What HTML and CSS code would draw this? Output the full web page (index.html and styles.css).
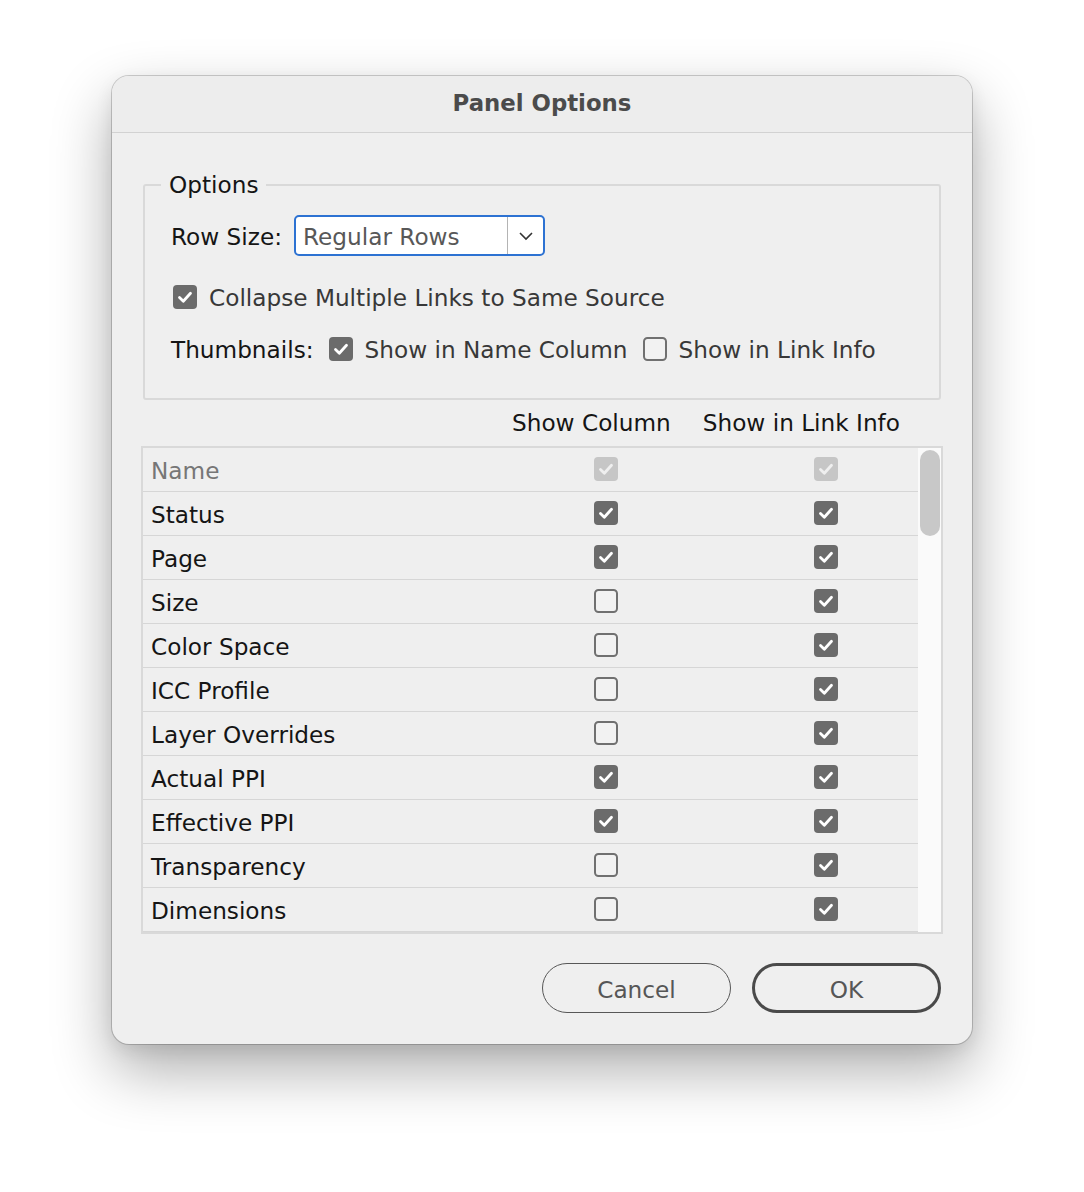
FILE: index.html
```html
<!DOCTYPE html>
<html>
<head>
<meta charset="utf-8">
<title>Panel Options</title>
<link rel="stylesheet" href="styles.css">
</head>
<body>
<div class="dialog">
  <div class="titlebar">Panel Options</div>
  <div class="content">
    <fieldset class="group">
      <legend>Options</legend>
      <div class="rowsize">
        <span class="label">Row Size:</span>
        <div class="select">
          <span class="select-value">Regular Rows</span>
          <span class="select-arrow"><svg viewBox="0 0 16 10" width="16" height="10"><path d="M2 2 L8 8 L14 2" fill="none" stroke="#333" stroke-width="1.6"/></svg></span>
        </div>
      </div>
      <div class="opt-row collapse">
        <svg class="cb on" viewBox="0 0 24 24"><rect x="0" y="0" width="24" height="24" rx="4"/><path d="M6.5 12.5 L10.3 16.2 L17.5 8.2"/></svg>
        <span class="opt-text">Collapse Multiple Links to Same Source</span>
      </div>
      <div class="opt-row thumbs">
        <span class="label">Thumbnails:</span>
        <svg class="cb on" viewBox="0 0 24 24"><rect x="0" y="0" width="24" height="24" rx="4"/><path d="M6.5 12.5 L10.3 16.2 L17.5 8.2"/></svg>
        <span class="opt-text">Show in Name Column</span>
        <svg class="cb off gap" viewBox="0 0 24 24"><rect x="1" y="1" width="22" height="22" rx="3.5"/></svg>
        <span class="opt-text">Show in Link Info</span>
      </div>
    </fieldset>

    <div class="col-headers">
      <span>Show Column</span>
      <span>Show in Link Info</span>
    </div>

    <div class="table">
      <div class="rows">
        <div class="row disabled"><span class="name">Name</span><span class="cell"><svg class="cb dis" viewBox="0 0 24 24"><rect x="0" y="0" width="24" height="24" rx="4"/><path d="M6.5 12.5 L10.3 16.2 L17.5 8.2"/></svg></span><span class="cell"><svg class="cb dis" viewBox="0 0 24 24"><rect x="0" y="0" width="24" height="24" rx="4"/><path d="M6.5 12.5 L10.3 16.2 L17.5 8.2"/></svg></span></div>
        <div class="row"><span class="name">Status</span><span class="cell"><svg class="cb on" viewBox="0 0 24 24"><rect x="0" y="0" width="24" height="24" rx="4"/><path d="M6.5 12.5 L10.3 16.2 L17.5 8.2"/></svg></span><span class="cell"><svg class="cb on" viewBox="0 0 24 24"><rect x="0" y="0" width="24" height="24" rx="4"/><path d="M6.5 12.5 L10.3 16.2 L17.5 8.2"/></svg></span></div>
        <div class="row"><span class="name">Page</span><span class="cell"><svg class="cb on" viewBox="0 0 24 24"><rect x="0" y="0" width="24" height="24" rx="4"/><path d="M6.5 12.5 L10.3 16.2 L17.5 8.2"/></svg></span><span class="cell"><svg class="cb on" viewBox="0 0 24 24"><rect x="0" y="0" width="24" height="24" rx="4"/><path d="M6.5 12.5 L10.3 16.2 L17.5 8.2"/></svg></span></div>
        <div class="row"><span class="name">Size</span><span class="cell"><svg class="cb off" viewBox="0 0 24 24"><rect x="1" y="1" width="22" height="22" rx="3.5"/></svg></span><span class="cell"><svg class="cb on" viewBox="0 0 24 24"><rect x="0" y="0" width="24" height="24" rx="4"/><path d="M6.5 12.5 L10.3 16.2 L17.5 8.2"/></svg></span></div>
        <div class="row"><span class="name">Color Space</span><span class="cell"><svg class="cb off" viewBox="0 0 24 24"><rect x="1" y="1" width="22" height="22" rx="3.5"/></svg></span><span class="cell"><svg class="cb on" viewBox="0 0 24 24"><rect x="0" y="0" width="24" height="24" rx="4"/><path d="M6.5 12.5 L10.3 16.2 L17.5 8.2"/></svg></span></div>
        <div class="row"><span class="name">ICC Profile</span><span class="cell"><svg class="cb off" viewBox="0 0 24 24"><rect x="1" y="1" width="22" height="22" rx="3.5"/></svg></span><span class="cell"><svg class="cb on" viewBox="0 0 24 24"><rect x="0" y="0" width="24" height="24" rx="4"/><path d="M6.5 12.5 L10.3 16.2 L17.5 8.2"/></svg></span></div>
        <div class="row"><span class="name">Layer Overrides</span><span class="cell"><svg class="cb off" viewBox="0 0 24 24"><rect x="1" y="1" width="22" height="22" rx="3.5"/></svg></span><span class="cell"><svg class="cb on" viewBox="0 0 24 24"><rect x="0" y="0" width="24" height="24" rx="4"/><path d="M6.5 12.5 L10.3 16.2 L17.5 8.2"/></svg></span></div>
        <div class="row"><span class="name">Actual PPI</span><span class="cell"><svg class="cb on" viewBox="0 0 24 24"><rect x="0" y="0" width="24" height="24" rx="4"/><path d="M6.5 12.5 L10.3 16.2 L17.5 8.2"/></svg></span><span class="cell"><svg class="cb on" viewBox="0 0 24 24"><rect x="0" y="0" width="24" height="24" rx="4"/><path d="M6.5 12.5 L10.3 16.2 L17.5 8.2"/></svg></span></div>
        <div class="row"><span class="name">Effective PPI</span><span class="cell"><svg class="cb on" viewBox="0 0 24 24"><rect x="0" y="0" width="24" height="24" rx="4"/><path d="M6.5 12.5 L10.3 16.2 L17.5 8.2"/></svg></span><span class="cell"><svg class="cb on" viewBox="0 0 24 24"><rect x="0" y="0" width="24" height="24" rx="4"/><path d="M6.5 12.5 L10.3 16.2 L17.5 8.2"/></svg></span></div>
        <div class="row"><span class="name">Transparency</span><span class="cell"><svg class="cb off" viewBox="0 0 24 24"><rect x="1" y="1" width="22" height="22" rx="3.5"/></svg></span><span class="cell"><svg class="cb on" viewBox="0 0 24 24"><rect x="0" y="0" width="24" height="24" rx="4"/><path d="M6.5 12.5 L10.3 16.2 L17.5 8.2"/></svg></span></div>
        <div class="row"><span class="name">Dimensions</span><span class="cell"><svg class="cb off" viewBox="0 0 24 24"><rect x="1" y="1" width="22" height="22" rx="3.5"/></svg></span><span class="cell"><svg class="cb on" viewBox="0 0 24 24"><rect x="0" y="0" width="24" height="24" rx="4"/><path d="M6.5 12.5 L10.3 16.2 L17.5 8.2"/></svg></span></div>
      </div>
      <div class="scrollbar"><div class="thumb"></div></div>
    </div>

    <div class="buttons">
      <button class="btn">Cancel</button>
      <button class="btn default">OK</button>
    </div>
  </div>
</div>
</body>
</html>
```

FILE: styles.css
```css
* { box-sizing: border-box; }

html, body {
  margin: 0;
  background: #ffffff;
}

body {
  padding-top: 76px;
  display: flex;
  justify-content: center;
  align-items: flex-start;
  font-family: "DejaVu Sans", "Liberation Sans", sans-serif;
  font-size: 23.2px;
  color: #151515;
  height: 1192px;
  overflow: hidden;
}

.dialog {
  width: 860px;
  background: #efefef;
  border-radius: 17px;
  box-shadow: 0 0 0 1px rgba(0,0,0,0.18), 0 26px 60px rgba(0,0,0,0.32), 0 6px 18px rgba(0,0,0,0.08);
  overflow: hidden;
}

.titlebar {
  height: 57px;
  border-bottom: 1px solid #d2d2d2;
  background: #ededed;
  display: flex;
  align-items: center;
  justify-content: center;
  font-weight: bold;
  font-size: 22.8px;
  color: #4b4b4b;
  padding-bottom: 2px;
}

.content {
  padding: 38px 29px 31px 29px;
}

.group {
  margin: 0 2px;
  border: 2px solid #d9d9d9;
  border-radius: 3px;
  padding: 16px 25px 35px 25px;
}

.group legend {
  margin-left: -9px;
  padding: 0 8px;
  line-height: 28px;
  color: #151515;
}

.rowsize {
  display: flex;
  align-items: center;
  height: 41px;
}

.rowsize .label {
  padding-top: 2px;
  margin-left: 1px;
}

.label {
  color: #151515;
}

.select {
  margin-left: 12px;
  width: 251px;
  height: 41px;
  border: 2px solid #2d72d2;
  border-radius: 5px;
  background: #ffffff;
  display: flex;
  align-items: stretch;
}

.select-value {
  flex: 1;
  display: flex;
  align-items: center;
  padding-left: 7px;
  padding-top: 2px;
  color: #585858;
  border-right: 1px solid #b4b4b4;
}

.select-arrow {
  width: 35px;
  display: flex;
  align-items: center;
  justify-content: center;
}

.opt-row {
  display: flex;
  align-items: center;
  height: 28px;
}

.collapse {
  margin-top: 27px;
  padding-left: 3px;
}

.thumbs {
  margin-top: 24px;
  padding-left: 1px;
}

.opt-text {
  margin-left: 12px;
  color: #383838;
}

.thumbs .cb {
  margin-left: 15px;
}

.cb {
  width: 24px;
  height: 24px;
  flex: none;
  display: block;
}

.cb.on rect { fill: #6b6b6b; }
.cb.on path, .cb.dis path {
  fill: none;
  stroke: #ffffff;
  stroke-width: 2.8;
  stroke-linecap: round;
  stroke-linejoin: round;
}
.cb.dis rect { fill: #c6c6c6; }
.cb.dis path { stroke: #efefef; }
.cb.off rect {
  fill: #f2f2f2;
  stroke: #707070;
  stroke-width: 2;
}

.col-headers {
  height: 46px;
  display: flex;
  align-items: center;
  padding-left: 371px;
  gap: 32px;
  padding-bottom: 1px;
  color: #151515;
}

.table {
  height: 488px;
  border: 2px solid #d9d9d9;
  display: flex;
  overflow: hidden;
  background: #efefef;
}

.rows {
  flex: 1;
  overflow: hidden;
}

.row {
  height: 44px;
  border-bottom: 1px solid #d6d6d6;
  display: grid;
  grid-template-columns: 1fr 184px 184px;
  column-gap: 36px;
  align-items: center;
  padding-left: 8px;
}

.row .name {
  color: #151515;
  padding-top: 2px;
}

.row.disabled .name {
  color: #767676;
}

.cell {
  display: flex;
  justify-content: center;
  padding-bottom: 2px;
}

.scrollbar {
  width: 23px;
  background: #fafafa;
  padding: 2px 1px 0 2px;
}

.thumb {
  height: 86px;
  background: #c8c8c8;
  border-radius: 10px;
}

.buttons {
  margin-top: 29px;
  display: flex;
  justify-content: flex-end;
  gap: 21px;
  padding-right: 2px;
}

.btn {
  width: 189px;
  height: 50px;
  border-radius: 25px;
  border: 1.5px solid #575757;
  background: #efefef;
  font-family: "DejaVu Sans", "Liberation Sans", sans-serif;
  font-size: 23.2px;
  color: #565656;
  padding: 3px 0 0 0;
}

.btn.default {
  border: 3px solid #4a4a4a;
}
```
